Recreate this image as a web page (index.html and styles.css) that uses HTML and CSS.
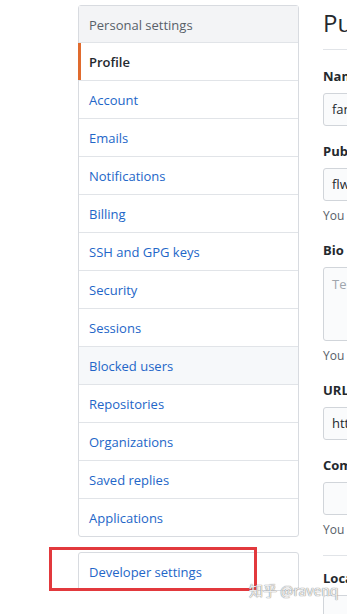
FILE: index.html
```html
<!DOCTYPE html>
<html lang="en">
<head>
<meta charset="utf-8">
<title>Settings</title>
<link rel="stylesheet" href="styles.css">
</head>
<body>
<div class="page">
  <aside class="sidebar">
    <nav class="menu">
      <div class="menu-heading">Personal settings</div>
      <a class="menu-item selected">Profile</a>
      <a class="menu-item">Account</a>
      <a class="menu-item">Emails</a>
      <a class="menu-item">Notifications</a>
      <a class="menu-item">Billing</a>
      <a class="menu-item">SSH and GPG keys</a>
      <a class="menu-item">Security</a>
      <a class="menu-item">Sessions</a>
      <a class="menu-item hover">Blocked users</a>
      <a class="menu-item">Repositories</a>
      <a class="menu-item">Organizations</a>
      <a class="menu-item">Saved replies</a>
      <a class="menu-item">Applications</a>
    </nav>
    <nav class="menu dev">
      <a class="menu-item">Developer settings</a>
      <div class="highlight"></div>
    </nav>
  </aside>
  <main class="main">
    <div class="subhead"><h2 class="subhead-heading">Public profile</h2></div>
    <div class="form-group">
      <label class="label">Name</label>
      <div class="input">fanfanq</div>
    </div>
    <div class="form-group">
      <label class="label">Public email</label>
      <div class="input">flwq</div>
      <p class="note">You can manage verified email addresses</p>
    </div>
    <div class="form-group">
      <label class="label">Bio</label>
      <div class="input textarea placeholder">Tell us a little bit about yourself</div>
      <p class="note">You can @mention other users</p>
    </div>
    <div class="form-group">
      <label class="label">URL</label>
      <div class="input">https://</div>
    </div>
    <div class="form-group">
      <label class="label">Company</label>
      <div class="input"></div>
      <p class="note">You can @mention your company</p>
    </div>
    <hr class="divider">
    <div class="form-group">
      <label class="label">Location</label>
      <div class="input"></div>
    </div>
  </main>
</div>
<div class="watermark">知乎 @ravenq</div>
</body>
</html>
```
FILE: styles.css
```css
html, body {
  margin: 0;
  padding: 0;
  overflow: hidden;
  background: #fff;
}
body {
  width: 347px;
  height: 614px;
  font-family: "Open Sans", "Noto Sans", Arial, sans-serif;
  font-size: 13px;
  color: #24292e;
  position: relative;
}
.page {
  display: flex;
  align-items: flex-start;
  gap: 24px;
  padding: 5px 0 0 78px;
  width: 700px;
}
.sidebar {
  width: 221px;
  flex-shrink: 0;
  display: flex;
  flex-direction: column;
  gap: 15px;
}
.menu {
  border: 1px solid #d8dbe0;
  border-radius: 3px;
  display: flex;
  flex-direction: column;
  position: relative;
}
.menu-heading {
  background: #f3f4f6;
  color: #586069;
  padding: 2px 10px 0;
  height: 34px;
  line-height: 34px;
  border-bottom: 1px solid #e1e4e8;
}
.menu-item {
  display: block;
  padding: 2px 10px 0;
  height: 35px;
  line-height: 35px;
  color: #2366c8;
  border-bottom: 1px solid #e1e4e8;
  position: relative;
  text-decoration: none;
}
.menu-item:last-child, .dev .menu-item {
  border-bottom: 0;
}
.menu-item.selected {
  color: #24292e;
  font-weight: 600;
}
.menu-item.selected::before {
  content: "";
  position: absolute;
  left: -1px;
  top: 0;
  bottom: 0;
  width: 3px;
  background: #e06b2e;
}
.menu-item.hover {
  background: #f6f8fa;
}
.highlight {
  position: absolute;
  left: -30px;
  top: -6px;
  width: 202px;
  height: 38px;
  border: 3px solid #e2393d;
}
.main {
  width: 400px;
  flex-shrink: 0;
}
.subhead {
  padding-bottom: 8px;
  margin-bottom: 16px;
  border-bottom: 1px solid #e1e4e8;
}
.subhead-heading {
  margin: 0;
  font-size: 24px;
  font-weight: 400;
  line-height: 36px;
}
.form-group {
  margin-bottom: 15px;
}
.label {
  display: block;
  font-weight: 700;
  font-size: 13px;
  line-height: 21px;
  margin-bottom: 6px;
}
.input {
  box-sizing: border-box;
  height: 33px;
  line-height: 31px;
  padding: 0 8px;
  background: #fafbfc;
  border: 1px solid #d1d5da;
  border-radius: 3px;
  color: #24292e;
  white-space: nowrap;
}
.textarea {
  height: 74px;
  line-height: 20px;
  padding-top: 6px;
}
.placeholder {
  color: #a0a6ad;
}
.note {
  margin: 6px 0 0;
  font-size: 12px;
  line-height: 18px;
  color: #586069;
}
.divider {
  border: 0;
  border-top: 1px solid #e1e4e8;
  margin: 16px 0 12px;
}
.watermark {
  position: absolute;
  left: 249px;
  top: 581px;
  font-family: "Noto Sans CJK SC", "Noto Sans", sans-serif;
  font-size: 14px;
  line-height: 18px;
  color: rgba(255, 255, 255, 0.85);
  text-shadow: 0 0 1px #8a8a8a, 0 0 1px #8a8a8a;
}
```
